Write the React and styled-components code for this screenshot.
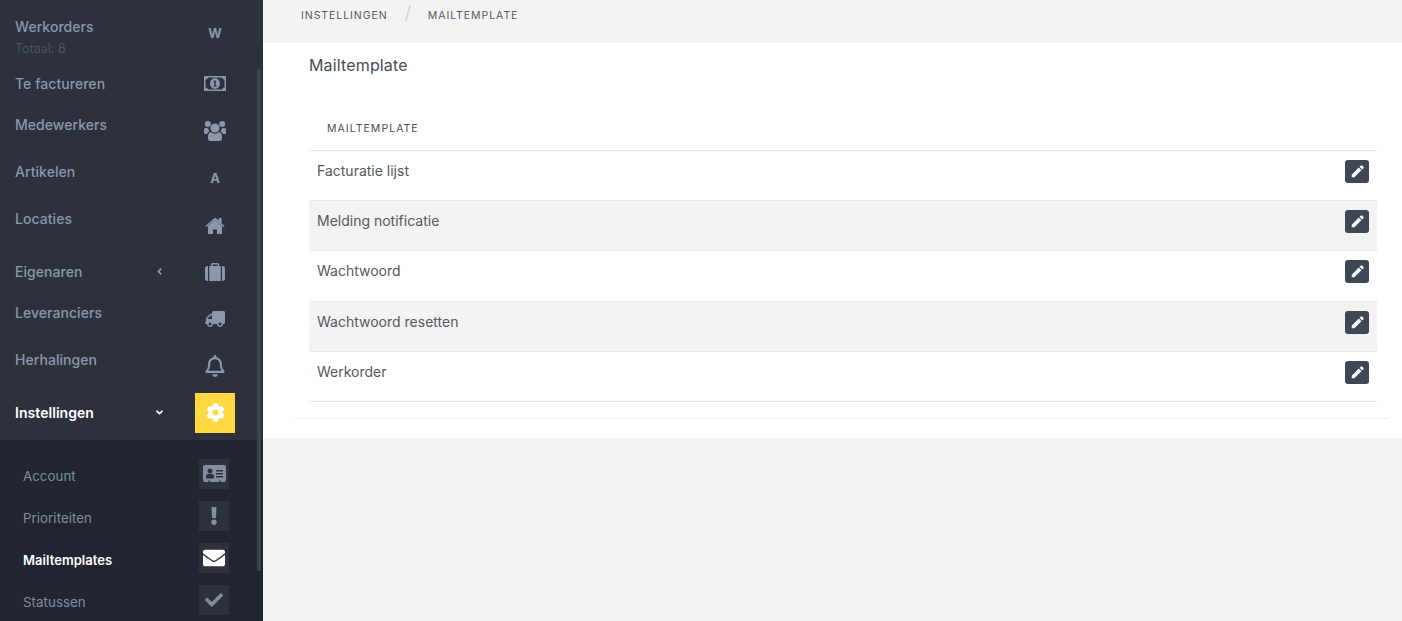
import styled, { createGlobalStyle } from 'styled-components';
import {
  FaTruck,
  FaRegBell,
  FaCog,
  FaExclamation,
  FaEnvelope,
  FaCheck,
  FaAngleLeft,
  FaAngleDown,
} from 'react-icons/fa';

const GlobalStyle = createGlobalStyle`
  html, body {
    margin: 0;
    height: 100%;
    overflow: hidden;
    background: #f3f3f3;
    font-family: Inter, "Liberation Sans", sans-serif;
  }
`;

const Page = styled.div`
  display: flex;
  height: 621px;
`;

const Sidebar = styled.aside`
  position: relative;
  flex: 0 0 263px;
  height: 621px;
  overflow: hidden;
  background: #2c313c;
`;

const Scrollbar = styled.div`
  position: absolute;
  left: 257px;
  top: 69px;
  width: 4px;
  height: 502px;
  background: #3a424e;
`;

/* the list is scrolled, only the bottom of the previous item is still visible */
const ClippedSub = styled.div`
  height: 16px;
  margin-top: -13px;
  padding-left: 15px;
  font-size: 12.5px;
  line-height: 16px;
  color: #4d5361;
`;

const TopItem = styled.div`
  display: flex;
  height: 57px;
  padding-left: 15px;
`;

const TopText = styled.div`
  flex: 1;
  padding-top: 16px;
`;

const TopTitle = styled.div`
  font-size: 14px;
  line-height: 16px;
  font-weight: 500;
  letter-spacing: 0.05px;
  color: #8e96ac;
`;

const TopSub = styled.div`
  margin-top: 6px;
  font-size: 12.5px;
  line-height: 16px;
  color: #4d5361;
`;

const MenuRow = styled.div`
  display: flex;
  align-items: center;
  height: 47px;
  padding-left: 15px;
`;

const MenuLabel = styled.span`
  flex: 1;
  padding-bottom: ${(p) => p.$lift || 0}px;
  font-size: 14px;
  line-height: 16px;
  font-weight: ${(p) => (p.$active ? 600 : 500)};
  letter-spacing: 0.05px;
  color: ${(p) => (p.$active ? '#ffffff' : '#8e96ac')};
`;

const Caret = styled.span`
  display: flex;
  width: 12px;
  margin-right: 30px;
  justify-content: center;
  font-size: 11px;
  color: ${(p) => (p.$active ? '#ffffff' : '#8e96ac')};
`;

const IconSlot = styled.div`
  display: flex;
  align-items: center;
  justify-content: center;
  flex: 0 0 40px;
  height: 40px;
  margin-top: ${(p) => p.$drop || 0}px;
  margin-right: 28px;
  font-size: ${(p) => p.$size || 20}px;
  color: ${(p) => (p.$active ? '#ffffff' : '#8e96ac')};
  background: ${(p) => (p.$active ? '#ffd740' : 'transparent')};
`;

const LetterIcon = styled.span`
  font-size: 13px;
  font-weight: 700;
`;

const SubMenu = styled.div`
  margin-top: 4px;
  height: 200px;
  padding-top: 19px;
  background: #21252f;
`;

const SubRow = styled.div`
  display: flex;
  align-items: center;
  height: 30px;
  margin-bottom: 12px;
  padding-left: 23px;
`;

const SubLabel = styled.span`
  flex: 1;
  padding-top: 3px;
  font-size: ${(p) => (p.$active ? 13 : 13.3)}px;
  line-height: 16px;
  letter-spacing: 0.05px;
  font-weight: ${(p) => (p.$active ? 600 : 400)};
  color: ${(p) => (p.$active ? '#ffffff' : '#848ca1')};
`;

const SubIcon = styled.div`
  display: flex;
  align-items: center;
  justify-content: center;
  flex: 0 0 30px;
  height: 30px;
  margin-right: 34px;
  font-size: ${(p) => p.$size || 18}px;
  color: ${(p) => (p.$active ? '#ffffff' : '#848ca1')};
  background: #2c313c;
`;

const Main = styled.main`
  flex: 1;
  min-width: 0;
`;

const Breadcrumb = styled.nav`
  display: flex;
  align-items: flex-start;
  height: 43px;
  padding-left: 38px;
  font-size: 10.5px;
  line-height: 31px;
  letter-spacing: 0.95px;
  color: #555a66;
`;

const Slash = styled.span`
  margin: -3px 16px 0 17px;
  font-size: 18px;
  font-weight: 300;
  color: #c9cbcf;
`;

const Panel = styled.section`
  height: 395px;
  box-sizing: border-box;
  padding: 0 10px 0 30px;
  background: #ffffff;
`;

const Card = styled.div`
  height: 376px;
  box-sizing: border-box;
  padding: 0 15px 0 16px;
  border-bottom: 1px solid #eeeeee;
  border-radius: 0 0 5px 5px;
`;

const Title = styled.h1`
  margin: 0;
  padding-top: 13px;
  font-size: 16px;
  line-height: 19px;
  font-weight: 400;
  letter-spacing: 0.15px;
  color: #4a4d55;
`;

const TableHead = styled.div`
  height: 76px;
  box-sizing: border-box;
  padding: 46px 0 0 18px;
  border-bottom: 1px solid #e9e9e9;
  font-size: 10.5px;
  line-height: 16px;
  letter-spacing: 1.05px;
  color: #4a4d55;
`;

const TableRow = styled.div`
  display: flex;
  align-items: flex-start;
  justify-content: space-between;
  height: ${(p) => p.$height}px;
  box-sizing: border-box;
  padding: 9px 8px 0;
  border-bottom: 1px solid #e9e9e9;
  background: ${(p) => (p.$striped ? '#f3f3f3' : '#ffffff')};
`;

const RowText = styled.span`
  padding-top: 3px;
  font-size: 14px;
  line-height: 16px;
  color: #555963;
`;

const EditButton = styled.button`
  display: flex;
  align-items: center;
  justify-content: center;
  width: 24px;
  height: 23px;
  padding: 0;
  border: 0;
  border-radius: 3px;
  color: #ffffff;
  background: #3d4756;
`;

const MoneyIcon = () => (
  <svg width="22" height="15" viewBox="0 0 22 15" fill="currentColor">
    <path
      fillRule="evenodd"
      d="M0 0h22v15H0zM1.500 3.500v8a2.500 2.500 0 0 1 2.500 2h14a2.500 2.500 0 0 1 2.500-2v-8A2.500 2.500 0 0 1 18 1.500H4a2.500 2.500 0 0 1-2.500 2zM11 2.200c2.800 0 5 2.400 5 5.300s-2.200 5.300-5 5.300-5-2.400-5-5.300 2.200-5.300 5-5.300zM9.400 10.600h3.400V9.500h-1V4.600h-1.100L9.300 6l.7.7.5-.5v3.300H9.400z"
    />
  </svg>
);

const UsersIcon = () => (
  <svg width="22" height="20" viewBox="0 0 22 20" fill="currentColor">
    <circle cx="3.800" cy="3" r="3" />
    <circle cx="18.200" cy="3" r="3" />
    <circle cx="11" cy="7" r="4.600" />
    <path d="M0 9.500C0 7.500.8 6.800 2.200 6.800c.6.400 1.300.6 2 .6.200 1 .6 2 1.300 2.800-1.200.6-2 1.500-2.500 2.800H1.300C.5 13 0 12.500 0 11.700zM22 9.500c0-2-.8-2.700-2.200-2.700-.6.400-1.300.6-2 .6-.2 1-.6 2-1.300 2.800 1.200.6 2 1.500 2.500 2.800h1.700c.8 0 1.300-.5 1.300-1.300zM7.200 11.300c1 .8 2.400 1.300 3.800 1.300s2.800-.5 3.800-1.300c2 0 3.200 1.500 3.200 4.200v1.700c0 1.600-1 2.800-2.600 2.800H6.600C5 20 4 18.800 4 17.200v-1.700c0-2.700 1.200-4.200 3.200-4.200z" />
  </svg>
);

const HomeIcon = () => (
  <svg width="20" height="18" viewBox="0 0 20 18" fill="currentColor">
    <path d="M10 3.200 3 9v7.400c0 .4.300.6.600.6H8v-4.600h4V17h4.400c.3 0 .6-.2.6-.6V9zM10 .8.300 8.900l1 1.200L10 2.900l8.700 7.200 1-1.200-3.200-2.700V1h-2.600v2.300z" />
  </svg>
);

const SuitcaseIcon = () => (
  <svg width="20" height="18" viewBox="0 0 20 18" fill="currentColor">
    <path
      fillRule="evenodd"
      d="M6 3V1.500C6 .6 6.600 0 7.500 0h5c.9 0 1.500.6 1.500 1.500V3h-1.500V1.500h-5V3z"
    />
    <path d="M0 5.500C0 4 1 3 2.500 3H3v15h-.5C1 18 0 17 0 15.500zM4.200 3h11.600v15H4.200zM17 3h.5C19 3 20 4 20 5.500v10c0 1.500-1 2.500-2.500 2.500H17z" />
  </svg>
);

const ContactIcon = () => (
  <svg width="23" height="18" viewBox="0 0 23 18" fill="currentColor">
    <path
      fillRule="evenodd"
      d="M2 0h19a2 2 0 0 1 2 2v13a2 2 0 0 1-2 2h-3.500v-1.500h-1.500V17H7v-1.500H5.500V17H2a2 2 0 0 1-2-2V2a2 2 0 0 1 2-2zM7 3.500a2.500 2.500 0 1 0 0 5 2.500 2.500 0 0 0 0-5zM3 13.500h8v-2c0-1.500-1-2.500-2-2.500H5c-1 0-2 1-2 2.500zM13 5v1.500h7V5zM13 8v1.500h7V8zM13 11v1.500h7V11z"
    />
  </svg>
);

const PencilIcon = () => (
  <svg width="13" height="13" viewBox="0 0 14 14" fill="currentColor">
    <path d="M10.500.7a1.200 1.200 0 0 1 1.700 0l1.100 1.100a1.200 1.200 0 0 1 0 1.700L12 4.800 9.200 2zM8.400 2.800l2.800 2.800-7.600 7.600H.8v-2.800z" />
  </svg>
);

const menuItems = [
  { label: 'Te factureren', icon: <MoneyIcon />, lift: 0 },
  { label: 'Medewerkers', icon: <UsersIcon />, lift: 11 },
  { label: 'Artikelen', icon: <LetterIcon>A</LetterIcon>, lift: 11 },
  { label: 'Locaties', icon: <HomeIcon />, lift: 11, drop: 3 },
  { label: 'Eigenaren', icon: <SuitcaseIcon />, caret: <FaAngleLeft /> },
  { label: 'Leveranciers', icon: <FaTruck style={{ transform: 'scaleX(-1)' }} />, lift: 11 },
  { label: 'Herhalingen', icon: <FaRegBell />, lift: 11, size: 22 },
  { label: 'Instellingen', icon: <FaCog />, caret: <FaAngleDown />, active: true, size: 19 },
];

const subItems = [
  { label: 'Account', icon: <ContactIcon /> },
  { label: 'Prioriteiten', icon: <FaExclamation /> },
  { label: 'Mailtemplates', icon: <FaEnvelope />, active: true, size: 22 },
  { label: 'Statussen', icon: <FaCheck />, size: 18 },
];

const templates = [
  { name: 'Facturatie lijst', height: 50 },
  { name: 'Melding notificatie', height: 50 },
  { name: 'Wachtwoord', height: 51 },
  { name: 'Wachtwoord resetten', height: 50 },
  { name: 'Werkorder', height: 50 },
];

const App = () => {
  return (
    <Page>
      <GlobalStyle />
      <Sidebar>
        <ClippedSub>Totaal: 567</ClippedSub>
        <TopItem>
          <TopText>
            <TopTitle>Werkorders</TopTitle>
            <TopSub>Totaal: 8</TopSub>
          </TopText>
          <IconSlot $drop={10}>
            <LetterIcon>W</LetterIcon>
          </IconSlot>
        </TopItem>
        {menuItems.map((item) => {
          return (
            <MenuRow key={item.label}>
              <MenuLabel $lift={item.lift} $active={item.active}>
                {item.label}
              </MenuLabel>
              {item.caret && <Caret $active={item.active}>{item.caret}</Caret>}
              <IconSlot $active={item.active} $size={item.size} $drop={item.drop}>
                {item.icon}
              </IconSlot>
            </MenuRow>
          );
        })}
        <SubMenu>
          {subItems.map((item) => {
            return (
              <SubRow key={item.label}>
                <SubLabel $active={item.active}>{item.label}</SubLabel>
                <SubIcon $active={item.active} $size={item.size}>
                  {item.icon}
                </SubIcon>
              </SubRow>
            );
          })}
        </SubMenu>
        <Scrollbar />
      </Sidebar>
      <Main>
        <Breadcrumb>
          <span>INSTELLINGEN</span>
          <Slash>/</Slash>
          <span>MAILTEMPLATE</span>
        </Breadcrumb>
        <Panel>
          <Card>
            <Title>Mailtemplate</Title>
            <TableHead>MAILTEMPLATE</TableHead>
            {templates.map((template, index) => {
              return (
                <TableRow key={template.name} $height={template.height} $striped={index % 2 === 1}>
                  <RowText>{template.name}</RowText>
                  <EditButton>
                    <PencilIcon />
                  </EditButton>
                </TableRow>
              );
            })}
          </Card>
        </Panel>
      </Main>
    </Page>
  );
};

export default App;
